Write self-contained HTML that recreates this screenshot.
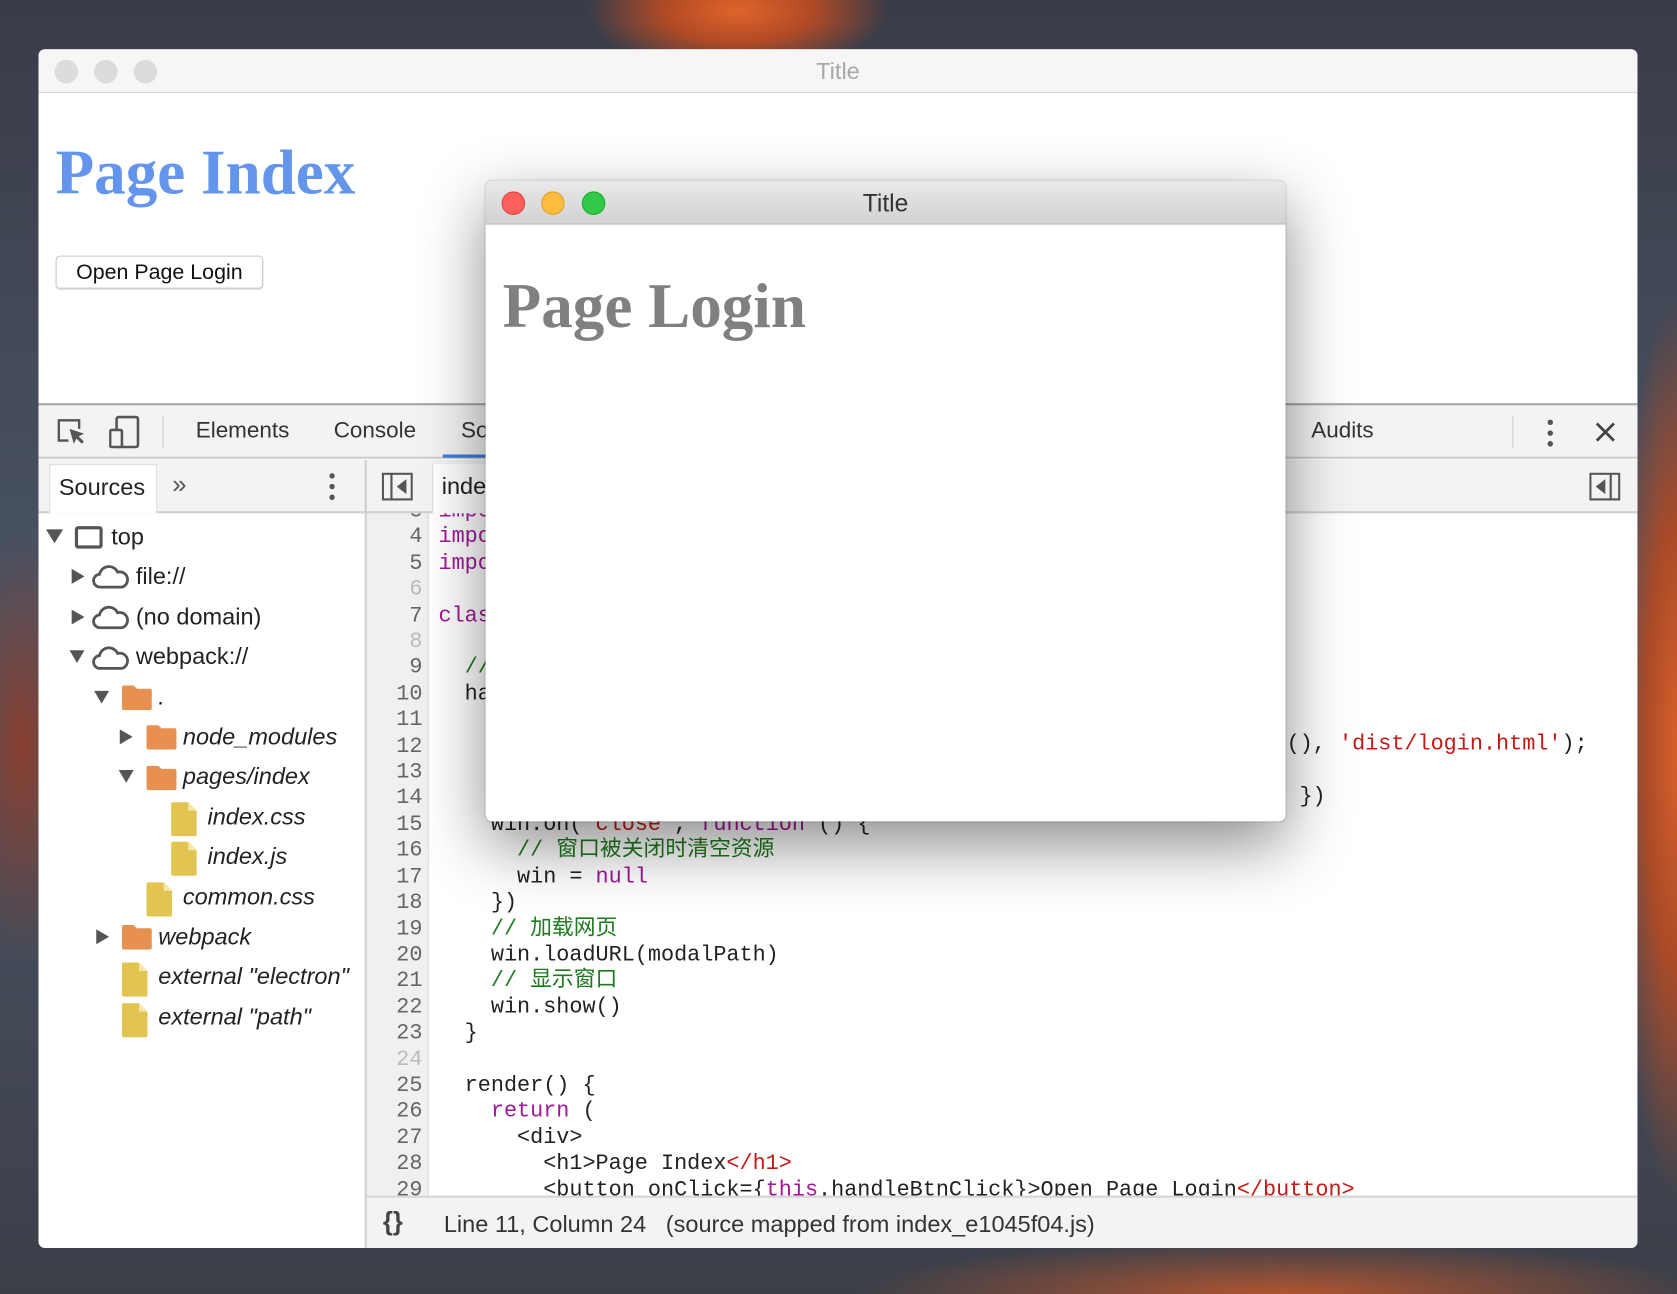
<!DOCTYPE html>
<html><head><meta charset="utf-8"><style>
*{margin:0;padding:0;box-sizing:border-box}
html,body{width:1677px;height:1294px;overflow:hidden}
body{background:#3b4350}
#s{position:absolute;left:0;top:0;width:1568px;height:1210px;transform:scale(1.06952,1.06942);transform-origin:0 0;overflow:hidden;
background:
radial-gradient(ellipse 140px 60px at 690px 10px,#e0642a 0%,#b04a25 50%,rgba(0,0,0,0) 100%),
radial-gradient(ellipse 60px 420px at 1568px 700px,#d8602a 0%,#a84a28 50%,rgba(0,0,0,0) 100%),
radial-gradient(ellipse 60px 200px at 20px 700px,#8a4030 0%,rgba(0,0,0,0) 100%),
radial-gradient(ellipse 400px 50px at 1200px 1210px,#b05530 0%,rgba(0,0,0,0) 100%),
linear-gradient(180deg,#3a3c48,#4a5566 50%,#3c3f48);font-family:"Liberation Sans","Noto Sans CJK SC",sans-serif}
.abs{position:absolute}
#main{left:36px;top:46px;width:1495px;height:1121px;background:#fff;border-radius:6px;overflow:hidden}
.tb{left:0;top:0;width:100%;height:41px;background:#f6f6f6;border-bottom:1px solid #d6d6d6}
.dot{width:22px;height:22px;border-radius:50%;top:10px}
.mono{font-family:"Liberation Mono","Noto Sans CJK SC",monospace}
.tab{top:12px;font-size:21px;color:#333}
.row{position:absolute;font-size:22px;color:#222;height:30px;line-height:30px;white-space:nowrap}
.tri{position:absolute;width:0;height:0}
.code{position:absolute;left:410px;font-size:20.4px;line-height:24.4px;white-space:pre;color:#222}
.ln{position:absolute;width:52px;text-align:right;font-size:20.4px;line-height:24.4px;color:#666;white-space:pre}
.k{color:#a2169a}.st{color:#c41a16}.c{color:#1d7a1d}.t{color:#c41a16}
</style></head><body><div id="s">

<div id="main" class="abs">
 <div class="abs tb">
  <div class="abs dot" style="left:15px;background:#dcdcdc"></div>
  <div class="abs dot" style="left:52px;background:#dcdcdc"></div>
  <div class="abs dot" style="left:89px;background:#dcdcdc"></div>
  <div class="abs" style="left:0;width:100%;top:8px;text-align:center;font-size:22px;color:#a8a8a8">Title</div>
 </div>
 <div class="abs" style="left:16px;top:81px;font-family:'Liberation Serif',serif;font-weight:bold;font-size:59px;color:#6495ed">Page Index</div>
 <div class="abs" style="left:16px;top:193px;width:194px;height:31px;border:1px solid #c8c8c8;border-radius:4px;box-shadow:0 1px 1px rgba(0,0,0,.12);font-size:20px;line-height:30px;text-align:center;color:#111">Open Page Login</div>

 <div class="abs" style="left:0;top:331px;width:100%;height:52px;background:#f3f3f3;border-top:2px solid #a8a8a8;border-bottom:2px solid #cfcfcf">
  <svg class="abs" style="left:16px;top:11px" width="30" height="30" viewBox="0 0 30 30"><path d="M12 22H3V3h19v8" fill="none" stroke="#555" stroke-width="2.2"/><path d="M13 11l4 14 2.5-5 5 5 2-2-5-5 5-2.5z" fill="#555"/></svg>
  <svg class="abs" style="left:66px;top:9px" width="30" height="32" viewBox="0 0 30 32"><rect x="7" y="2" width="20" height="28" rx="2" fill="none" stroke="#555" stroke-width="2.4"/><rect x="1" y="14" width="11" height="16" rx="1.5" fill="#f3f3f3" stroke="#555" stroke-width="2.4"/></svg>
  <div class="abs" style="left:116px;top:10px;width:1px;height:30px;background:#ccc"></div>
  <div class="abs tab" style="left:147px">Elements</div>
  <div class="abs tab" style="left:276px">Console</div>
  <div class="abs tab" style="left:395px">Sources</div>
  <div class="abs" style="left:378px;top:46px;width:80px;height:3px;background:#3b7ddd"></div>
  <div class="abs tab" style="left:1190px">Audits</div>
  <div class="abs" style="left:1378px;top:10px;width:1px;height:30px;background:#ccc"></div>
  <div class="abs" style="left:1411px;top:13px;width:5px;height:26px;background:radial-gradient(circle 2.6px at 2.5px 3px,#555 95%,transparent),radial-gradient(circle 2.6px at 2.5px 13px,#555 95%,transparent),radial-gradient(circle 2.6px at 2.5px 23px,#555 95%,transparent)"></div>
  <svg class="abs" style="left:1455px;top:15px" width="20" height="20" viewBox="0 0 20 20"><path d="M2 2L18 18M18 2L2 18" stroke="#444" stroke-width="2.6"/></svg>
 </div>
 <div class="abs" style="left:0;top:384px;width:100%;height:50px;background:#f3f3f3;border-bottom:2px solid #cfcfcf"></div>
 <div class="abs" style="left:10px;top:388px;width:101px;height:46px;background:#fff;border:1px solid #ddd;border-bottom:none;font-size:22px;line-height:42px;padding-left:8px;color:#222">Sources</div>
 <div class="abs" style="left:125px;top:394px;font-size:24px;color:#555">»</div>
 <div class="abs" style="left:272px;top:396px;width:5px;height:26px;background:radial-gradient(circle 2.6px at 2.5px 3px,#555 95%,transparent),radial-gradient(circle 2.6px at 2.5px 13px,#555 95%,transparent),radial-gradient(circle 2.6px at 2.5px 23px,#555 95%,transparent)"></div>
 <div class="abs" style="left:305px;top:384px;width:2px;height:737px;background:#cfcfcf"></div>
 <svg class="abs" style="left:321px;top:396px" width="29" height="26" viewBox="0 0 29 26"><rect x="1" y="1" width="27" height="24" fill="none" stroke="#555" stroke-width="2"/><path d="M9 1v24" stroke="#555" stroke-width="2"/><path d="M23 6v14l-9-7z" fill="#555"/></svg>
 <div class="abs" style="left:368px;top:388px;width:80px;height:46px;background:#fff;border-left:1px solid #ddd;font-size:22px;line-height:42px;padding-left:8px;color:#222">index.js</div>
 <svg class="abs" style="left:1450px;top:396px" width="29" height="26" viewBox="0 0 29 26"><rect x="1" y="1" width="27" height="24" fill="none" stroke="#555" stroke-width="2"/><path d="M20 1v24" stroke="#555" stroke-width="2"/><path d="M15 6v14l-9-7z" fill="#555"/></svg>
 <div class="abs" style="left:307px;top:1072px;width:1188px;height:49px;background:#f3f3f3;border-top:2px solid #d6d6d6;font-size:22px;color:#333">
  <span class="abs" style="left:15px;top:9px;font-size:24px;font-weight:bold;color:#444">{}</span>
  <span class="abs" style="left:72px;top:12px;white-space:nowrap">Line 11, Column 24&nbsp;&nbsp;&nbsp;(source mapped from index_e1045f04.js)</span>
 </div>
</div>

<div class="abs" style="left:0;top:0">
 <div class="tri" style="left:43px;top:495px;border-left:8px solid transparent;border-right:8px solid transparent;border-top:13px solid #555"></div>
 <div class="abs" style="left:70px;top:492px;width:26px;height:21px;border:3px solid #555;border-radius:3px"></div>
 <div class="row" style="left:104px;top:487px">top</div>

 <div class="tri" style="left:67px;top:532px;border-top:7px solid transparent;border-bottom:7px solid transparent;border-left:12px solid #555"></div>
 <svg class="abs" style="left:86px;top:527px" width="36" height="24" viewBox="0 0 36 24"><path d="M8 22a6 6 0 0 1-1-12 9 9 0 0 1 17-2 7 7 0 0 1 4 14z" fill="none" stroke="#555" stroke-width="2.6"/></svg>
 <div class="row" style="left:127px;top:524px">file://</div>

 <div class="tri" style="left:67px;top:570px;border-top:7px solid transparent;border-bottom:7px solid transparent;border-left:12px solid #555"></div>
 <svg class="abs" style="left:86px;top:565px" width="36" height="24" viewBox="0 0 36 24"><path d="M8 22a6 6 0 0 1-1-12 9 9 0 0 1 17-2 7 7 0 0 1 4 14z" fill="none" stroke="#555" stroke-width="2.6"/></svg>
 <div class="row" style="left:127px;top:562px">(no domain)</div>

 <div class="tri" style="left:65px;top:608px;border-left:7px solid transparent;border-right:7px solid transparent;border-top:12px solid #555"></div>
 <svg class="abs" style="left:86px;top:603px" width="36" height="24" viewBox="0 0 36 24"><path d="M8 22a6 6 0 0 1-1-12 9 9 0 0 1 17-2 7 7 0 0 1 4 14z" fill="none" stroke="#555" stroke-width="2.6"/></svg>
 <div class="row" style="left:127px;top:599px">webpack://</div>

 <div class="tri" style="left:88px;top:646px;border-left:7px solid transparent;border-right:7px solid transparent;border-top:12px solid #555"></div>
 <svg class="abs" style="left:114px;top:641px" width="28" height="23" viewBox="0 0 28 23"><path d="M0 2Q0 0 2 0h9l3 3h12q2 0 2 2v16q0 2-2 2H2q-2 0-2-2z" fill="#e8904f"/></svg>
 <div class="row" style="left:147px;top:637px">.</div>

 <div class="tri" style="left:112px;top:682px;border-top:7px solid transparent;border-bottom:7px solid transparent;border-left:12px solid #555"></div>
 <svg class="abs" style="left:137px;top:678px" width="28" height="23" viewBox="0 0 28 23"><path d="M0 2Q0 0 2 0h9l3 3h12q2 0 2 2v16q0 2-2 2H2q-2 0-2-2z" fill="#e8904f"/></svg>
 <div class="row" style="left:171px;top:674px;font-style:italic">node_modules</div>

 <div class="tri" style="left:111px;top:720px;border-left:7px solid transparent;border-right:7px solid transparent;border-top:12px solid #555"></div>
 <svg class="abs" style="left:137px;top:716px" width="28" height="23" viewBox="0 0 28 23"><path d="M0 2Q0 0 2 0h9l3 3h12q2 0 2 2v16q0 2-2 2H2q-2 0-2-2z" fill="#e8904f"/></svg>
 <div class="row" style="left:171px;top:711px;font-style:italic">pages/index</div>

 <svg class="abs" style="left:160px;top:750px" width="24" height="32" viewBox="0 0 24 32"><path d="M0 2Q0 0 2 0h14l8 8v22q0 2-2 2H2q-2 0-2-2z" fill="#e2c452"/><path d="M16 0v8h8" fill="#f4e7a8"/></svg>
 <div class="row" style="left:194px;top:749px;font-style:italic">index.css</div>
 <svg class="abs" style="left:160px;top:787px" width="24" height="32" viewBox="0 0 24 32"><path d="M0 2Q0 0 2 0h14l8 8v22q0 2-2 2H2q-2 0-2-2z" fill="#e2c452"/><path d="M16 0v8h8" fill="#f4e7a8"/></svg>
 <div class="row" style="left:194px;top:786px;font-style:italic">index.js</div>
 <svg class="abs" style="left:137px;top:825px" width="24" height="32" viewBox="0 0 24 32"><path d="M0 2Q0 0 2 0h14l8 8v22q0 2-2 2H2q-2 0-2-2z" fill="#e2c452"/><path d="M16 0v8h8" fill="#f4e7a8"/></svg>
 <div class="row" style="left:171px;top:824px;font-style:italic">common.css</div>

 <div class="tri" style="left:90px;top:869px;border-top:7px solid transparent;border-bottom:7px solid transparent;border-left:12px solid #555"></div>
 <svg class="abs" style="left:114px;top:865px" width="28" height="23" viewBox="0 0 28 23"><path d="M0 2Q0 0 2 0h9l3 3h12q2 0 2 2v16q0 2-2 2H2q-2 0-2-2z" fill="#e8904f"/></svg>
 <div class="row" style="left:148px;top:861px;font-style:italic">webpack</div>
 <svg class="abs" style="left:114px;top:900px" width="24" height="32" viewBox="0 0 24 32"><path d="M0 2Q0 0 2 0h14l8 8v22q0 2-2 2H2q-2 0-2-2z" fill="#e2c452"/><path d="M16 0v8h8" fill="#f4e7a8"/></svg>
 <div class="row" style="left:148px;top:898px;font-style:italic">external "electron"</div>
 <svg class="abs" style="left:114px;top:938px" width="24" height="32" viewBox="0 0 24 32"><path d="M0 2Q0 0 2 0h14l8 8v22q0 2-2 2H2q-2 0-2-2z" fill="#e2c452"/><path d="M16 0v8h8" fill="#f4e7a8"/></svg>
 <div class="row" style="left:148px;top:936px;font-style:italic">external "path"</div>
</div>

<div class="abs" style="left:343px;top:480px;width:58px;height:638px;background:#f0f0f0;border-right:1px solid #ddd;overflow:hidden">
 <div class="ln mono" style="left:0;top:-13px">3
4
5
<span style="color:#bbb">6</span>
7
<span style="color:#bbb">8</span>
9
10
11
12
13
14
15
16
17
18
19
20
21
22
23
<span style="color:#bbb">24</span>
25
26
27
28
29</div>
</div>
<div class="abs" style="left:401px;top:480px;width:1130px;height:638px;overflow:hidden">
 <div class="code mono" style="left:9px;top:-13px"><span class="k">import</span> React <span class="k">from</span> <span class="st">'react'</span>
<span class="k">import</span> { remote } <span class="k">from</span> <span class="st">'electron'</span>
<span class="k">import</span> path <span class="k">from</span> <span class="st">'path'</span>

<span class="k">class</span> Index <span class="k">extends</span> React.Component {

  <span class="c">// 打开新窗口</span>
  handleBtnClick() {




    win.on(<span class="st">'close'</span>, <span class="k">function</span> () {
      <span class="c">// 窗口被关闭时清空资源</span>
      win = <span class="k">null</span>
    })
    <span class="c">// 加载网页</span>
    win.loadURL(modalPath)
    <span class="c">// 显示窗口</span>
    win.show()
  }

  render() {
    <span class="k">return</span> (
      &lt;div&gt;
        &lt;h1&gt;Page Index<span class="t">&lt;/h1&gt;</span>
        &lt;button onClick={<span class="k">this</span>.handleBtnClick}&gt;Open Page Login<span class="t">&lt;/button&gt;</span></div>
 <div class="code mono" style="left:802px;top:205px">(), <span class="st">'dist/login.html'</span>);</div>
 <div class="code mono" style="left:814px;top:254px">})</div>
</div>

<div class="abs" style="left:454px;top:169px;width:748px;height:599px;background:#fff;border-radius:6px;overflow:hidden;box-shadow:0 22px 60px rgba(0,0,0,.45),0 0 0 1px rgba(0,0,0,.12)">
 <div class="abs" style="left:0;top:0;width:100%;height:41px;background:linear-gradient(#e9e9e9,#d2d2d2);border-bottom:1px solid #b8b8b8">
  <div class="abs dot" style="left:15px;background:#fc605c;border:1px solid #e0443e"></div>
  <div class="abs dot" style="left:52px;background:#fdbc40;border:1px solid #dea123"></div>
  <div class="abs dot" style="left:90px;background:#34c84a;border:1px solid #1aab29"></div>
  <div class="abs" style="left:0;width:100%;top:8px;text-align:center;font-size:23px;color:#333">Title</div>
 </div>
 <div class="abs" style="left:16px;top:83px;font-family:'Liberation Serif',serif;font-weight:bold;font-size:59px;color:#808080">Page Login</div>
</div>

</div></body></html>
